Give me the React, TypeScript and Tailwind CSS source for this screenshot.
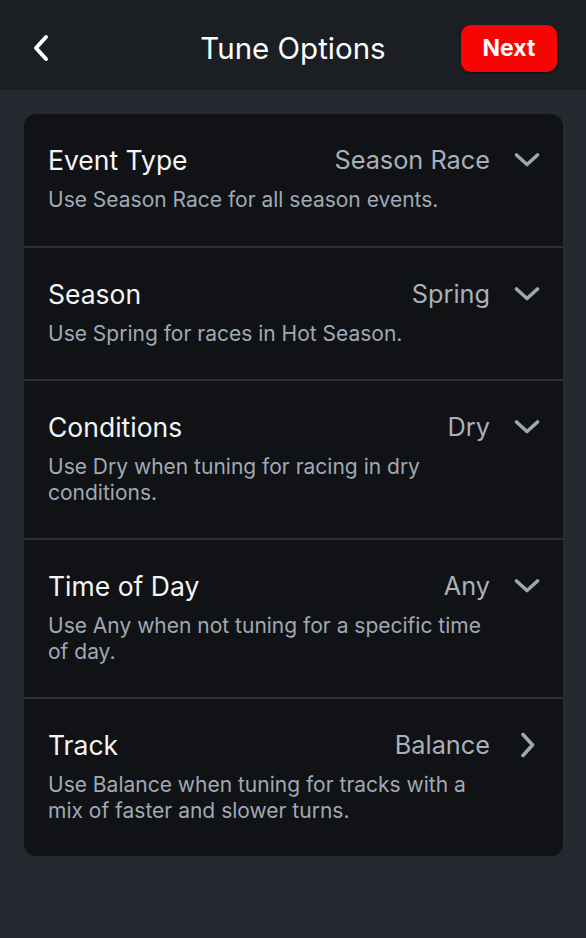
import React from "react";

type Row = { title: string; value: string; desc: string; arrow: "down" | "right" };

const rows: Row[] = [
  { title: "Event Type", value: "Season Race", desc: "Use Season Race for all season events.", arrow: "down" },
  { title: "Season", value: "Spring", desc: "Use Spring for races in Hot Season.", arrow: "down" },
  { title: "Conditions", value: "Dry", desc: "Use Dry when tuning for racing in dry conditions.", arrow: "down" },
  { title: "Time of Day", value: "Any", desc: "Use Any when not tuning for a specific time of day.", arrow: "down" },
  { title: "Track", value: "Balance", desc: "Use Balance when tuning for tracks with a mix of faster and slower turns.", arrow: "right" },
];

function ChevronDown() {
  return (
    <svg width="26" height="16" viewBox="0 0 26 16" fill="none">
      <path d="M2.5 3 L13 12.5 L23.5 3" stroke="#9ea6b0" strokeWidth="3.6" strokeLinecap="round" strokeLinejoin="round" />
    </svg>
  );
}

function ChevronRight() {
  return (
    <svg width="26" height="26" viewBox="0 0 26 26" fill="none">
      <path d="M9 2.5 L18.5 13 L9 23.5" stroke="#9ea6b0" strokeWidth="3.6" strokeLinecap="round" strokeLinejoin="round" />
    </svg>
  );
}

export default function App() {
  return (
    <div
      className="w-[586px] h-[938px] bg-[#252a31] flex flex-col"
      style={{ fontFamily: "Inter, 'Noto Sans', sans-serif" }}
    >
      <div className="h-[90px] bg-[#1b1e22] flex items-center justify-between pl-[31px] pr-[29px] pt-[6px] relative">
        <svg width="20" height="28" viewBox="0 0 20 28" fill="none">
          <path d="M15 3 L5 14 L15 25" stroke="#ffffff" strokeWidth="4" strokeLinecap="round" strokeLinejoin="round" />
        </svg>
        <div className="absolute left-0 right-0 top-0 h-[90px] pt-[6px] flex items-center justify-center pointer-events-none">
          <span className="text-[29.5px] text-white">Tune Options</span>
        </div>
        <button className="w-[96px] h-[47px] rounded-[10px] bg-[#f70505] text-white font-bold text-[23px] shadow-[0_1px_2px_rgba(0,0,0,0.5)]">
          Next
        </button>
      </div>
      <div className="pl-6 pr-[23px] pt-6">
        <div className="bg-[#101215] rounded-[12px] overflow-hidden">
          {rows.map((r, i) => (
            <div key={r.title} className={i > 0 ? "border-t-2 border-[#2a2e35]" : ""}>
              <div className={i === 0 ? "pl-6 pr-[23px] pt-[31px] pb-[33px]" : "pl-6 pr-[23px] pt-[31px] pb-[32px]"}>
                <div className="flex items-center h-[30px]">
                  <span className="flex-1 text-[26.5px] text-[#f4f5f6] leading-[30px]">{r.title}</span>
                  <span className="text-[25.3px] text-[#a8b0ba] leading-[30px]">{r.value}</span>
                  <span className="w-[26px] ml-[24px] flex items-center justify-center">
                    {r.arrow === "down" ? <ChevronDown /> : <ChevronRight />}
                  </span>
                </div>
                <p className="mt-[12px] pr-12 text-[21px] leading-[26px] text-[#a0a9b4]">{r.desc}</p>
              </div>
            </div>
          ))}
        </div>
      </div>
    </div>
  );
}
